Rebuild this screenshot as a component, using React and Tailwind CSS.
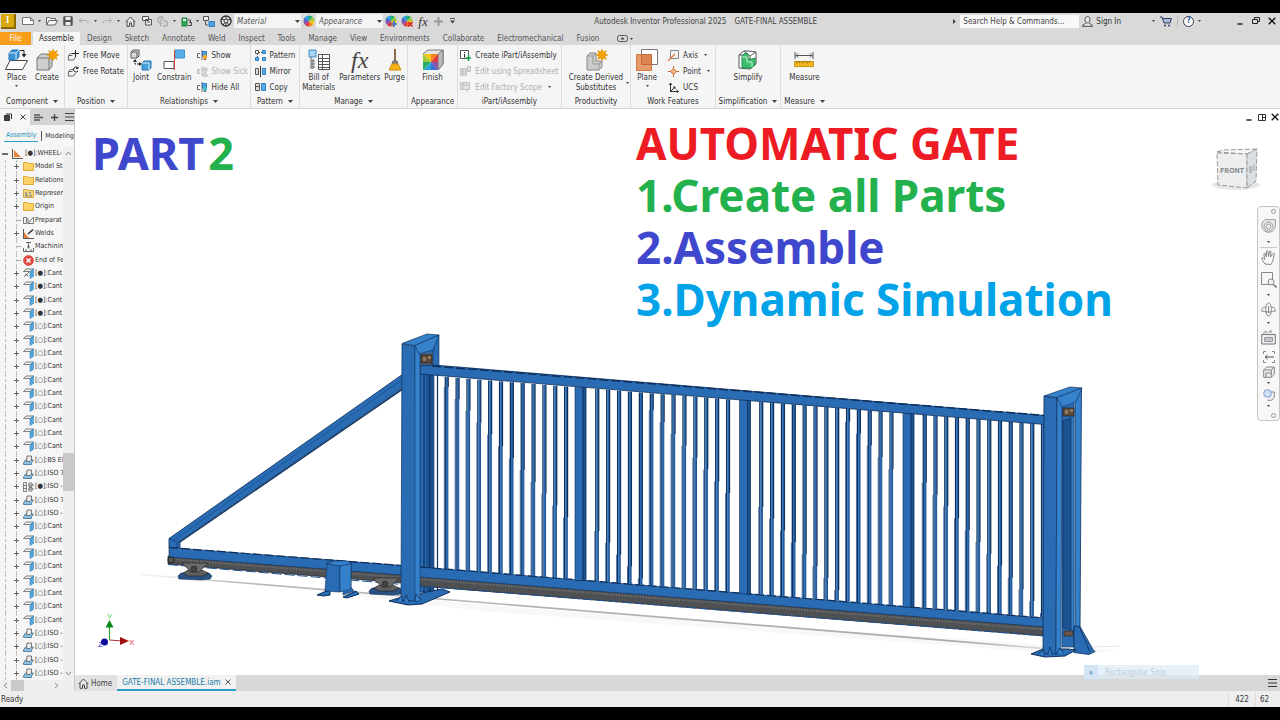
import { useState } from 'react'
import clsx from 'clsx'

const TABS = [
  'Assemble', 'Design', 'Sketch', 'Annotate', 'Weld', 'Inspect', 'Tools', 'Manage',
  'View', 'Environments', 'Collaborate', 'Electromechanical', 'Fusion'
]

const repeat = (n, row) => Array.from({ length: n }, () => row)

const TREE = [
  { icon: 'folder', label: 'Model St', open: true },
  { icon: 'folder', label: 'Relations', open: true },
  { icon: 'folderRep', label: 'Represen', open: true },
  { icon: 'folder', label: 'Origin', open: true },
  { icon: 'prep', label: 'Preparat' },
  { icon: 'weld', label: 'Welds', open: true },
  { icon: 'machining', label: 'Machinin' },
  { icon: 'end', label: 'End of Fe' },
  { icon: 'partPin', label: '[●]:Cant', open: true },
  ...repeat(3, { icon: 'part', label: '[●]:Cant', open: true }),
  ...repeat(10, { icon: 'part', label: '[○]:Cant', open: true }),
  { icon: 'bolt', label: '[○]:BS El', open: true },
  { icon: 'bolt', label: '[○]:ISO 7', open: true },
  { icon: 'pattern', label: '[●]:ISO -', open: true },
  { icon: 'bolt', label: '[○]:ISO 7', open: true },
  { icon: 'bolt', label: '[○]:ISO -', open: true },
  ...repeat(8, { icon: 'part', label: '[○]:Cant', open: true }),
  ...repeat(4, { icon: 'bolt', label: '[○]:ISO -', open: true })
]

function Svg({ w, h, children, className }) {
  return (
    <svg width={w} height={h} viewBox={`0 0 ${w} ${h}`} fill="none" stroke="#555" className={clsx('shrink-0', className)} aria-hidden="true">
      {children}
    </svg>
  )
}

const Caret = ({ className }) => (
  <Svg w={5} h={3} className={className}><path d="M0 0h5L2.500 3z" fill="#444" stroke="none" /></Svg>
)

const SmallCaret = ({ className }) => (
  <Svg w={3} h={2} className={className}><path d="M0 0h3L1.500 2z" fill="#444" stroke="none" /></Svg>
)

const WHEEL = ['#f5c518', '#f58220', '#e0383e', '#8c4fa8', '#3f6fd0', '#27a7d8', '#27ae60', '#9bcb3c']

function ColorWheel({ badge }) {
  return (
    <Svg w={12} h={12}>
      <g stroke="none">
        {WHEEL.map((c, i) => {
          const a = (i * Math.PI) / 4
          const b = a + Math.PI / 4
          return (
            <path
              key={c}
              fill={c}
              d={`M6 6L${6 + 5.5 * Math.cos(a)} ${6 + 5.5 * Math.sin(a)}A5.5 5.5 0 0 1 ${6 + 5.5 * Math.cos(b)} ${6 + 5.5 * Math.sin(b)}z`}
            />
          )
        })}
      </g>
      {badge === 'add' && <path d="M9 6v6M6 9h6" stroke="#2f6fd0" strokeWidth="1.6" />}
      {badge === 'clear' && <path d="M7 7l4.500 4.500M11.500 7L7 11.500" stroke="#d8232a" strokeWidth="1.6" />}
    </Svg>
  )
}

const QUICK = {
  new: <Svg w={12} h={10}><path d="M.5 1.500h8l3 3v4h-11zM8.500 1.500v3h3" fill="#fff" stroke="#777" /></Svg>,
  open: <Svg w={12} h={10}><path d="M.5 9V1.500h3l1 1h5v2M.5 9l2.500-4.500h8.500L9 9z" fill="#f4f4f4" stroke="#666" /></Svg>,
  save: <Svg w={10} h={10}><path d="M.8.8h8.400v8.400H.8z" fill="#555" /><path d="M2.500 1h5v3h-5zM2.500 6h5v3.200h-5z" fill="#eee" stroke="none" /></Svg>,
  undo: <Svg w={11} h={8}><path d="M4 1L1 3.500 4 6M1 3.500h6.500c2 0 2.500 1.500 2.500 3" stroke="#aaa" /></Svg>,
  redo: <Svg w={11} h={8}><path d="M7 1l3 2.500L7 6M10 3.500H3.500C1.500 3.500 1 5 1 6.500" stroke="#b4b4b4" /></Svg>,
  home: <Svg w={11} h={11}><path d="M.7 6L5.500 1l4.800 5M2 5v5.300h2.500V7h2v3.300H9V5" fill="#eee" stroke="#444" /></Svg>,
  windows: <Svg w={10} h={10}><path d="M.5.5h6v4h-6zM3.500 3.500h6v5.500h-6zM5 6h3" fill="#eee" /></Svg>,
  update: <Svg w={11} h={11}><path d="M1 6V3a2 2 0 0 1 2-2h3v2M5 2.500L2 7h2.500L3 10.500M6 5h4v5H6" stroke="#999" /></Svg>,
  battery: <Svg w={11} h={11}><path d="M1 2h5v8H1z" fill="#2eaa57" stroke="#237a41" /><path d="M2 3h3v2H2z" fill="#eaf6ee" stroke="none" /><path d="M7 4h2.500v2.500H8h2.500v3H7" stroke="#444" /></Svg>,
  link: <Svg w={12} h={11}><path d="M.5.5h5v4h-5z" fill="#eee" /><path d="M2.500 5v4h3" /><path d="M6 5.500h5.500v5H6z" fill="#4da3df" stroke="#2f7fc0" /></Svg>,
  wheel: (
    <Svg w={12} h={12}>
      <circle cx="6" cy="6" r="5" fill="#eee" stroke="#333" strokeWidth="1.400" />
      <circle cx="6" cy="6" r="2" stroke="#333" />
      <path d="M6 1v3M6 8v3M1.500 4l2.700 1M10.500 4L7.800 5M3 10l1.700-2.300M9 10L7.300 7.700" stroke="#333" />
    </Svg>
  )
}

const QUICK_BAR = [
  ['new', 'New', 'w-[17px]', true],
  ['open', 'Open', 'w-[17px]'],
  ['save', 'Save', 'w-[15px]'],
  ['undo', 'Undo', 'w-[17px]', true],
  ['redo', 'Redo', 'w-[16px]', true],
  ['home', 'Home', 'w-[17px]'],
  ['windows', 'Switch windows', 'w-[15px]'],
  ['update', 'Update', 'w-[17px]', true],
  ['battery', 'Select priority', 'w-[16px]', true],
  ['link', 'Component', 'w-[16px]'],
  ['wheel', 'Adjust', 'w-[17px]']
]

const starPath = 'M0-6l1.300 3L4.400-4.400 3-1.300 6 0 3 1.300 4.400 4.400 1.300 3 0 6-1.300 3-4.400 4.400-3 1.300-6 0-3-1.300-4.400-4.400-1.300-3z'

const BIG = {
  place: (
    <Svg w={23} h={22}>
      <path d="M5 11.500h17.500l-5 9H.5z" fill="#fff" stroke="#444" />
      <path d="M4 4l3-3h7v7l-3 3H4z" fill="#3c93d6" stroke="#2573b3" />
      <path d="M4 4h7v7M11 4l3-3" stroke="#cfe6f7" />
      <path d="M15 1.500h4V6" stroke="#222" /><path d="M16.500 5h5L19 8.500z" fill="#222" stroke="none" />
    </Svg>
  ),
  create: (
    <Svg w={23} h={22}>
      <path d="M1 9l4-4h11v12l-3 4H1z" fill="#cfcfcf" stroke="#777" />
      <path d="M1 9h12v12M13 9l3-4" stroke="#777" />
      <path d={starPath} transform="translate(17 6)" fill="#f5a100" stroke="#d98900" strokeWidth=".5" />
    </Svg>
  ),
  joint: (
    <Svg w={22} h={22}>
      <path d="M1 3l2-2h6v6l-2 2H1zM1 3h6v6" fill="#ddd" stroke="#555" />
      <path d="M5 11v4h5" stroke="#222" strokeDasharray="2 1" />
      <path d="M3 13l2-3 2 3zM9 13l3 2-3 2z" fill="#222" stroke="none" />
      <path d="M12 14l2-2h7v7l-2 2h-7z" fill="#4aa0dd" stroke="#2573b3" /><path d="M12 14h7v7" stroke="#d4e9f8" />
    </Svg>
  ),
  constrain: (
    <Svg w={22} h={22}>
      <path d="M1 12.500h10v7H1z" fill="#fff" stroke="#555" />
      <path d="M12 1h9.500v8H12z" fill="#5aade6" stroke="#3c8fcf" />
      <path d="M11.500 1v20" stroke="#d0463f" />
    </Svg>
  ),
  bom: (
    <Svg w={22} h={22}>
      <path d="M1 1h7v7H1z" fill="#a8d4f2" stroke="#3f8fc9" />
      <path d="M3 8v12M3 12h4M3 18h4M3 15h4M5 10v10" stroke="#666" />
      <path d="M10.500 5.500h11v15h-11zM10.500 9.500h11M10.500 12.500h11M10.500 15.500h11M10.500 18.500h11M14.500 5.500v15" fill="#fff" stroke="#555" />
    </Svg>
  ),
  purge: (
    <Svg w={14} h={22}>
      <path d="M7 0v12" stroke="#7a4a1c" strokeWidth="1.600" />
      <path d="M5 12h4l1 3H4z" fill="#888" stroke="#666" />
      <path d="M4 15h6l3 6H1z" fill="#f6b31b" stroke="#d28d00" />
    </Svg>
  ),
  finish: (
    <Svg w={22} h={22}>
      <path d="M1 5l5-4h15v14l-5 6" fill="#e4e4e4" stroke="#777" /><path d="M16 5l5-4v14l-5 6z" fill="#bbb" stroke="#777" />
      <g stroke="none">
        <path d="M1 5h8v8z" fill="#f5c518" /><path d="M9 5h7l-7 8z" fill="#f58220" />
        <path d="M16 5v8H9z" fill="#e0383e" /><path d="M16 13v8l-7-8z" fill="#8c4fa8" />
        <path d="M16 21H9v-8z" fill="#3f6fd0" /><path d="M9 21H1l8-8z" fill="#27a7d8" />
        <path d="M1 21v-8h8z" fill="#27ae60" /><path d="M1 13V5l8 8z" fill="#9bcb3c" />
      </g>
    </Svg>
  ),
  derived: (
    <Svg w={23} h={22}>
      <path d="M2 7l3-3h6v8h6v6l-3 3H2z" fill="#ccc" stroke="#888" />
      <path d="M2 7h6v8h6v6M8 7l3-3M14 15l3-3" stroke="#999" />
      <path d={starPath} transform="translate(17 6)" fill="#f5a100" stroke="#d98900" strokeWidth=".5" />
    </Svg>
  ),
  plane: (
    <Svg w={22} h={22}>
      <path d="M5.500.5h16v15h-16z" fill="#fff" stroke="#777" />
      <path d="M.5 5.500h15v16H.5z" fill="#e59a6c" stroke="#d8783d" />
      <path d="M5.500 5.500h10v10h-10z" fill="#dd8450" stroke="#c76a35" />
    </Svg>
  ),
  simplify: (
    <Svg w={20} h={22}>
      <path d="M1 6l5-4h5l7 1v12l-6 5-11-1z" fill="#fff" stroke="#555" />
      <path d="M1 6h6l1 6M18 3l-6 4v13M6 2l6 5" stroke="#555" />
      <path d="M4 7l3-3 3 1v5h4l3-1v7l-4 3H4z" fill="#3fbf6e" stroke="#1f8c49" />
      <path d="M4 8h5v5h5v5" stroke="#c9f0d7" />
    </Svg>
  ),
  measure: (
    <Svg w={20} h={16}>
      <path d="M1 0v7M19 0v7M2 3.500h16M4 1.500l-2 2 2 2M16 1.500l2 2-2 2" stroke="#555" />
      <path d="M.5 9.500h19v5H.5z" fill="#f3b81f" stroke="#c99410" />
      <path d="M3 9v3M5.500 9v2M8 9v3M10.500 9v2M13 9v3M15.500 9v2" stroke="#7a5a00" strokeWidth=".7" />
    </Svg>
  )
}

const SMALL = {
  freeMove: <Svg w={11} h={11}><path d="M.5 5.500l2-2h3M.5 5.500V10h5l1.500-2v-1M.5 5.500h4" stroke="#666" /><path d="M7.500 0v7M4 3.500h7" stroke="#222" /></Svg>,
  freeRotate: <Svg w={11} h={11}><path d="M.5 5.500l2-2h3M.5 5.500V10h5l1.500-2v-1M.5 5.500h4" stroke="#666" /><path d="M9.500 1.500A2.500 2.500 0 1 0 10 5M10 .5v2H8" stroke="#222" /></Svg>,
  show: <Svg w={11} h={11}><path d="M3 3.500H.5v4H3M5 0v10" stroke="#666" /><path d="M5.500 1.500h4V6h-4z" fill="#4da3df" stroke="#2f7fc0" /><circle cx="8" cy="7" r="2.200" fill="#f5a623" stroke="none" /><path d="M7 9.500h2" /></Svg>,
  showSick: <Svg w={11} h={11}><path d="M3 3.500H.5v4H3M5 0v10M6 2h4v3H6zM8 6l2.500 4h-5z" stroke="#bbb" fill="#ddd" /></Svg>,
  hideAll: <Svg w={11} h={11}><path d="M3 3.500H.5v4H3M5 0v10" stroke="#666" /><path d="M5.500 1.500h4V6h-4z" fill="#4da3df" stroke="#2f7fc0" /><circle cx="8" cy="7" r="2.200" fill="#4cb8c4" stroke="none" /><path d="M7 9.500h2" /></Svg>,
  pattern: <Svg w={11} h={11}><path d="M.5.500h3v3h-3z" fill="#fff" /><path d="M7.500.5h3v3h-3zM.5 7.500h3v3h-3zM7.500 7.500h3v3h-3z" fill="#5aade6" stroke="#2f7fc0" /><path d="M4 2.500h3M2.500 4v3" strokeDasharray="1 1" /></Svg>,
  mirror: <Svg w={11} h={11}><path d="M.5 2.500h3v6h-3z" fill="#ddd" /><path d="M5.500 0v11" stroke="#333" /><path d="M7.500 2.500h3v6h-3z" fill="#5aade6" stroke="#2f7fc0" /></Svg>,
  copy: <Svg w={11} h={11}><path d="M.5 1.500h4v7h-4z" fill="#ddd" /><path d="M6.500 1.500h4v7h-4z" fill="#5aade6" stroke="#2f7fc0" /><path d="M.5 4.500h4" /></Svg>,
  ipart: <Svg w={11} h={11}><path d="M.5.5h8v8h-8z" fill="#fff" stroke="#555" /><path d="M4.500 2v1M4.500 4v3.500" stroke="#222" /><path d="M8.500 5v6M5.500 8h6" stroke="#17a04b" strokeWidth="1.500" /></Svg>,
  sheet: <Svg w={11} h={11}><path d="M.5 2.500h6v7h-6zM.5 5h6M.5 7.500h6M3 2.500v7M7.500.500h3v5h-3z" stroke="#c0c0c0" fill="#e4e4e4" /></Svg>,
  scope: <Svg w={11} h={11}><path d="M.5.500h9v7h-9zM.5 3h9M3 .5v7M6 10l4-4" stroke="#c0c0c0" fill="#e4e4e4" /></Svg>,
  axis: <Svg w={11} h={11}><path d="M2.500.500h8v8h-8z" fill="#f4f4f4" stroke="#888" /><path d="M0 11l7-7" stroke="#e07b39" strokeWidth="1.300" /></Svg>,
  point: <Svg w={11} h={11}><path d="M5.500 0v11M0 5.500h11" stroke="#c96a2c" /><path d="M5.500 2.500l3 3-3 3-3-3z" fill="#f7b183" stroke="#c96a2c" /></Svg>,
  ucs: <Svg w={11} h={11}><path d="M2.500 10V1M1 3l1.500-2L4 3M2.500 9.500h8M8.500 8l2 1.500L8.500 11M2.500 9.500L7 5M5 5h2v2" stroke="#333" /></Svg>
}

const TREE_ICONS = {
  folder: <Svg w={11} h={9}><path d="M.5.500h4l1 1h5v7H.5z" fill="#fbd267" stroke="#e0aa35" /></Svg>,
  folderRep: <Svg w={11} h={9}><path d="M.5.500h4l1 1h5v7H.5z" fill="#f3d37c" stroke="#d6a843" /><path d="M3 3v4h2M6 4h2M6 7h3" stroke="#55708a" /></Svg>,
  prep: <Svg w={11} h={9}><path d="M.5 1.500h3v6h-3zM5 7.500h5.500V1zM5 2v5.500" stroke="#777" /></Svg>,
  weld: <Svg w={11} h={10}><path d="M.5 0v9.500H11" stroke="#555" /><path d="M1 3l5 6H1z" fill="#e8843a" stroke="none" /><path d="M5 5l5-4.500" stroke="#333" strokeWidth="1.600" /></Svg>,
  machining: <Svg w={11} h={10}><path d="M3 .5h5M5.500.500v6M4 5h3M.5 6v3.500h10V6M3 7v2M8 7v2" stroke="#666" /></Svg>,
  end: <Svg w={11} h={11}><circle cx="5.500" cy="5.500" r="5" fill="#df4b43" stroke="#c73932" strokeWidth=".6" /><path d="M3.500 3.500l4 4M7.500 3.500l-4 4" stroke="#fff" strokeWidth="1.400" /></Svg>,
  part: <Svg w={11} h={11}><path d="M.5 3.500L3 1h7.500L7.500 3.500z" fill="#f4f4f4" stroke="#666" strokeWidth=".8" /><path d="M7 3.500L10.500 1v7.500L7 10.500z" fill="#4fa6dc" stroke="#3c89bd" strokeWidth=".6" /></Svg>,
  partPin: <Svg w={11} h={11}><path d="M.5 3.500L3 1h7.500L7.500 3.500zM1 9l5-5M2 6l3 2" fill="#f4f4f4" stroke="#555" strokeWidth=".8" /><path d="M7 3.500L10.500 1v7.500L7 10.500z" fill="#4fa6dc" stroke="#3c89bd" strokeWidth=".6" /></Svg>,
  bolt: <Svg w={11} h={10}><path d="M.5 8l2-3h8l-2 3v1.500h-8z" fill="#8cc3e8" stroke="#3f6f95" strokeWidth=".8" /><path d="M4 1h4.500v4L7 6.500H3.500z" fill="#eee" stroke="#555" strokeWidth=".8" /></Svg>,
  pattern: <Svg w={11} h={10}><path d="M.5.500h3v9h-3zM.5 3.500h3M.5 6.500h3M5 3h6M5 7h6M6 1v3.500h3V1zM6 5.500V9h3V5.500z" stroke="#666" strokeWidth=".8" fill="#eee" /></Svg>
}

function BigButton({ icon, label, caret, className, side }) {
  return (
    <button className={clsx('flex flex-col items-center leading-[10px]', className)}>
      <span className="flex h-[26px] items-center justify-center">{BIG[icon] || icon}</span>
      <span className="relative whitespace-pre-line text-center">
        {label}
        {side && <SmallCaret className="absolute -right-[6px] top-[9px]" />}
      </span>
      {caret && <SmallCaret className="mt-[2px]" />}
    </button>
  )
}

function SmallButton({ icon, label, caret, disabled }) {
  return (
    <button disabled={disabled} className={clsx('flex h-4 items-center gap-[4px] whitespace-nowrap', disabled && 'text-[#b0b0b0]')}>
      {SMALL[icon]}
      <span>{label}</span>
      {caret && <SmallCaret className="ml-[2px]" />}
    </button>
  )
}

function Group({ title, caret, className, gap = 'gap-[5px]', children }) {
  return (
    <section className={clsx('flex shrink-0 flex-col border-r border-[#dcdcdc]', className)}>
      <div className={clsx('flex flex-1 items-start justify-center pt-[2px]', gap)}>{children}</div>
      <h2 className="flex h-[13px] items-center justify-center gap-[5px] whitespace-nowrap">
        {title}
        {caret && <Caret />}
      </h2>
    </section>
  )
}

function TitleBar() {
  return (
    <header className="flex h-[19px] shrink-0 items-center bg-[#d9d9d9] pb-[3px] whitespace-nowrap">
      <button aria-label="Application menu" className="ml-px mr-[3px] flex h-[15px] w-[15px] items-center justify-center border-r-2 border-b-2 border-[#8a6a00] bg-[#d9a90f] font-serif text-[9px] font-bold text-white">I</button>
      {QUICK_BAR.map(([icon, label, width, caret]) => (
        <div key={icon} className="flex items-center">
          <button aria-label={label} className={clsx('flex items-center justify-center', width)}>{QUICK[icon]}</button>
          {caret && <button aria-label={`${label} options`} className="flex w-[7px] justify-center"><SmallCaret /></button>}
        </div>
      ))}
      <Picker label="Material" />
      <span className="flex w-[15px] justify-center"><ColorWheel /></span>
      <Picker label="Appearance" />
      <button aria-label="Adjust appearance" className="flex w-4 justify-center"><ColorWheel badge="add" /></button>
      <button aria-label="Clear appearance" className="flex w-4 justify-center"><ColorWheel badge="clear" /></button>
      <button className="w-4 text-center font-['Liberation_Serif',serif] text-[13px] italic leading-none text-[#333]">fx</button>
      <button aria-label="Add" className="flex w-[15px] justify-center"><Svg w={9} h={9}><path d="M4.500 0v9M0 4.500h9" stroke="#999" strokeWidth="2" /></Svg></button>
      <button aria-label="Customize toolbar" className="flex w-3 justify-center"><Svg w={5} h={6}><path d="M0 .5h5" /><path d="M0 2.500h5L2.500 5.500z" fill="#444" stroke="none" /></Svg></button>

      <h1 className="flex flex-1 justify-center gap-2 text-[#444]">
        <span>Autodesk Inventor Professional 2025</span>
        <span>GATE-FINAL ASSEMBLE</span>
      </h1>

      <Svg w={3} h={5} className="mr-[4px]"><path d="M0 0v5l3-2.500z" fill="#444" stroke="none" /></Svg>
      <input
        aria-label="Search Help & Commands"
        placeholder="Search Help & Commands..."
        className="h-[13px] w-[119px] bg-[#f8f8f8] px-[3px] text-[8px] placeholder:text-[#444]"
      />
      <button className="ml-[3px] flex items-center gap-[3px]">
        <Svg w={11} h={11}><path d="M5.500.700c2 0 2.500 1.500 2.500 3S7 7 5.500 7 3 5 3 3.700 3.500.7 5.500.7zM4 7c0 1-3.500 1-3.500 3.300h10C10.500 8 7 8 7 7" stroke="#444" fill="#e8e8e8" /></Svg>
        Sign In
      </button>
      <button aria-label="Account options" className="ml-[29px] flex w-[7px] justify-center"><SmallCaret /></button>
      <button aria-label="App store" className="ml-[3px]">
        <Svg w={12} h={11}><path d="M0 1h2l2 6h6l1.500-4.500H3" stroke="#2c3e66" fill="#a9b9d6" /><circle cx="5" cy="9.500" r="1" fill="#2c3e66" stroke="none" /><circle cx="9" cy="9.500" r="1" fill="#2c3e66" stroke="none" /></Svg>
      </button>
      <span className="mx-[5px] h-[12px] w-px bg-[#bbb]" />
      <button aria-label="Help" className="flex h-[11px] w-[11px] items-center justify-center rounded-full border border-[#345] bg-white font-bold leading-none text-[#2a55a0]">?</button>
      <button aria-label="Help options" className="flex w-[11px] justify-center"><SmallCaret /></button>
      <div className="ml-[31px] flex items-center gap-[8px] pr-[4px]">
        <WindowButton label="Minimize" />
        <WindowButton label="Restore" />
        <WindowButton label="Close" />
      </div>
    </header>
  )
}

function WindowButton({ label }) {
  return (
    <button aria-label={label}>
      <Svg w={8} h={8}>
        {label === 'Minimize' && <path d="M1.500 7h5" stroke="#111" strokeWidth="1.400" />}
        {label === 'Restore' && <path d="M2.500 2.500V.500h5v4H5.500M.500 2.500h5v4h-5z" stroke="#222" />}
        {label === 'Tile' && <path d="M.5 1.500h7v6h-7zM4.500 1.500v6M4.500 4.500h3" stroke="#333" />}
        {label === 'Close' && <path d="M.7.7l6.600 6.600M7.300.7L.7 7.300" stroke="#111" strokeWidth="1.300" />}
      </Svg>
    </button>
  )
}

function Picker({ label }) {
  return (
    <div className="relative flex w-[67px] items-center">
      <select aria-label={label} className="h-[14px] w-full appearance-none bg-[#f4f4f4] pl-[3px] text-[8px] italic text-[#555]">
        <option>{label}</option>
      </select>
      <Caret className="pointer-events-none absolute right-[1px]" />
    </div>
  )
}

function RibbonTabs() {
  const [active, setActive] = useState('Assemble')
  return (
    <nav className="flex h-[13px] shrink-0 items-stretch gap-px bg-[#d9d9d9] whitespace-nowrap text-[#555]">
      <button className="mr-px w-[31px] bg-[#f99d1c] text-white">File</button>
      {TABS.map(t => (
        <button key={t} onClick={() => setActive(t)} className={clsx('px-[6px]', active === t && 'bg-[#f5f5f5] text-[#222]')}>
          {t}
        </button>
      ))}
      <button aria-label="Ribbon display" className="ml-[11px] flex items-center gap-[2px]">
        <Svg w={11} h={7}><rect x=".5" y=".5" width="10" height="6" rx="2" stroke="#555" /><path d="M3.500 4.500L5.500 2l2 2.500z" fill="#444" stroke="none" /></Svg>
        <SmallCaret />
      </button>
    </nav>
  )
}

function Ribbon() {
  return (
    <div className="flex h-[64px] shrink-0 border-b border-[#d4d4d4] bg-[#f5f5f5] text-[#333]">
      <Group title="Component" caret className="w-[65px]" gap="gap-[7px]">
        <BigButton icon="place" label="Place" caret />
        <BigButton icon="create" label="Create" />
      </Group>
      <Group title="Position" caret className="w-[63px]">
        <div>
          <SmallButton icon="freeMove" label="Free Move" />
          <SmallButton icon="freeRotate" label="Free Rotate" />
        </div>
      </Group>
      <Group title="Relationships" caret className="w-[123px]">
        <BigButton icon="joint" label="Joint" />
        <BigButton icon="constrain" label="Constrain" />
        <div>
          <SmallButton icon="show" label="Show" />
          <SmallButton icon="showSick" label="Show Sick" disabled />
          <SmallButton icon="hideAll" label="Hide All" />
        </div>
      </Group>
      <Group title="Pattern" caret className="w-[49px]">
        <div>
          <SmallButton icon="pattern" label="Pattern" />
          <SmallButton icon="mirror" label="Mirror" />
          <SmallButton icon="copy" label="Copy" />
        </div>
      </Group>
      <Group title="Manage" caret className="w-[108px]" gap="gap-[4px]">
        <BigButton icon="bom" label={'Bill of\nMaterials'} />
        <BigButton
          icon={<span className="font-['Liberation_Serif',serif] text-[24px] italic leading-[22px] text-[#444]">fx</span>}
          label="Parameters"
        />
        <BigButton icon="purge" label="Purge" />
      </Group>
      <Group title="Appearance" className="w-[50px]">
        <BigButton icon="finish" label="Finish" />
      </Group>
      <Group title="iPart/iAssembly" className="w-[104px]">
        <div>
          <SmallButton icon="ipart" label="Create iPart/iAssembly" />
          <SmallButton icon="sheet" label="Edit using Spreadsheet" disabled />
          <SmallButton icon="scope" label="Edit Factory Scope" caret disabled />
        </div>
      </Group>
      <Group title="Productivity" className="w-[69px]">
        <BigButton icon="derived" label={'Create Derived\nSubstitutes'} side />
      </Group>
      <Group title="Work Features" className="w-[85px]" gap="gap-[10px]">
        <BigButton icon="plane" label="Plane" caret />
        <div>
          <SmallButton icon="axis" label="Axis" caret />
          <SmallButton icon="point" label="Point" caret />
          <SmallButton icon="ucs" label="UCS" />
        </div>
      </Group>
      <Group title="Simplification" caret className="w-[65px]">
        <BigButton icon="simplify" label="Simplify" />
      </Group>
      <Group title="Measure" caret className="w-[47px] border-r-0">
        <BigButton icon="measure" label="Measure" />
      </Group>
    </div>
  )
}

function Chevron({ dir }) {
  const d = { up: 'M1 4l2.500-3L6 4', down: 'M1 1l2.500 3L6 1', left: 'M4 0L1 2.500 4 5', right: 'M2 0l3 2.500L2 5' }[dir]
  return <Svg w={7} h={5}><path d={d} stroke="#888" /></Svg>
}

function Browser() {
  return (
    <aside className="flex w-[75px] shrink-0 flex-col border-r border-[#c8c8c8] bg-[#f6f6f6] text-[#333]">
      <div className="flex h-[16px] shrink-0 bg-[#d4d4d4]">
        <div className="flex w-[30px] items-center justify-center gap-[8px] bg-[#f6f6f6]">
          <Svg w={8} h={8}><path d="M.5 2.500h5v5h-5z" fill="#444" stroke="#333" /><path d="M2 1h5.500v5" stroke="#333" /></Svg>
          <button aria-label="Close panel"><Svg w={6} h={6}><path d="M.5.500l5 5M5.500.500l-5 5" stroke="#444" /></Svg></button>
        </div>
        <div className="flex flex-1 items-center justify-between pl-[4px]">
          <Svg w={9} h={7}><path d="M0 1h6M0 3.500h9M0 6h6" stroke="#555" strokeWidth="1.500" /></Svg>
          <button aria-label="Add panel"><Svg w={7} h={7}><path d="M3.500 0v7M0 3.500h7" stroke="#444" strokeWidth="1.300" /></Svg></button>
          <button aria-label="Panel menu"><Svg w={9} h={8}><path d="M0 .5h9M0 4h9M0 7.500h9" stroke="#444" /></Svg></button>
        </div>
      </div>
      <div className="flex h-[22px] shrink-0 items-center whitespace-nowrap pl-[4px] text-[7px]">
        <button className="border-b border-[#2b9fc9] px-[2px] leading-[11px] text-[#1b8fb8]">Assembly</button>
        <span className="mx-[3px] h-[10px] w-px bg-[#555]" />
        <button className="leading-[11px]">Modeling</button>
      </div>
      <div className="flex flex-1">
        <ul className="flex w-[63px] flex-col overflow-hidden whitespace-nowrap text-[7px]">
          <li className="flex min-h-[13px] flex-1 items-center">
            <button aria-label="Collapse" className="ml-[2px] mr-[4px]"><Svg w={6} h={6}><path d="M0 3h6" stroke="#222" strokeWidth="1.300" /></Svg></button>
            <Svg w={11} h={10}><path d="M.5 0v9.500H11" stroke="#555" /><path d="M2 1l7 7H2z" fill="#e8843a" stroke="none" /></Svg>
            <span className="ml-[2px]">[●]:WHEEL-</span>
          </li>
          {TREE.map((row, i) => (
            <li key={i} className="flex min-h-[13px] flex-1 items-center">
              <span className="w-[6px] shrink-0 self-stretch border-r border-dashed border-[#c0c0c0]" />
              <span className="w-[11px] shrink-0 self-stretch border-r border-dashed border-[#c0c0c0]" />
              {row.open ? (
                <button aria-label="Expand" className="-ml-[4px] mr-[3px] bg-[#f6f6f6]">
                  <Svg w={7} h={7}><path d="M3.500 1v5M1 3.500h5" stroke="#666" /></Svg>
                </button>
              ) : (
                <span className="mr-[2px] w-[4px] shrink-0 border-t border-dashed border-[#aaa]" />
              )}
              {TREE_ICONS[row.icon]}
              <span className="ml-px">{row.label}</span>
            </li>
          ))}
        </ul>
        <div className="flex flex-1 flex-col items-center bg-[#efefef]">
          <span className="flex h-[13px] items-center"><Chevron dir="up" /></span>
          <span className="grow-[5]" />
          <span className="h-[38px] w-full bg-[#c9c9c9]" />
          <span className="grow-[3]" />
          <span className="flex h-[13px] items-center"><Chevron dir="down" /></span>
        </div>
      </div>
      <div className="flex h-[11px] shrink-0 items-center bg-[#efefef] pl-[3px]">
        <Chevron dir="left" />
        <span className="ml-px h-full w-[13px] bg-[#c9c9c9]" />
        <span className="ml-[29px]"><Chevron dir="right" /></span>
      </div>
    </aside>
  )
}

const NAVY = '#0d2f5c'
const BLUE = '#2a6cb3'
const LIGHT = '#3581cc'
const DARK = '#1d5292'

// height of the top and bottom rails at a given x
const topRail = x => 367 + (x - 420) * 0.079
const bottomRail = x => 567 + (x - 420) * 0.081

const BARS = [
  ...Array.from({ length: 12 }, (_, i) => 446.5 + i * 10.85),
  ...Array.from({ length: 13 }, (_, i) => 597 + i * 10.9),
  ...Array.from({ length: 13 }, (_, i) => 761 + i * 10.85),
  ...Array.from({ length: 12 }, (_, i) => 924.5 + i * 10.75)
]

function Roller({ x, y }) {
  return (
    <g transform={`translate(${x} ${y})`} stroke="#222" strokeWidth=".6">
      <path d="M-16 10l3-3h28l3 3-2 3-9 1-22-1z" fill="#2a5180" stroke={NAVY} />
      <path d="M-11 7l5-3h14l6 3-5 3h-15z" fill="#5f5f5f" />
      <path d="M-12-3h26l-9 9h-8z" fill="#6a6a6a" />
      <circle cx="0" cy="3" r="3" fill="#444" />
    </g>
  )
}

function Gate() {
  return (
    <svg viewBox="75 109 1205 566" preserveAspectRatio="xMinYMin meet" className="absolute inset-0 h-full w-full" role="img" aria-label="Sliding gate assembly">
      <defs>
        <linearGradient id="ground" x1="0" x2="1"><stop offset="0" stopColor="#ddd" stopOpacity=".3" /><stop offset=".1" stopColor="#bbb" /><stop offset=".9" stopColor="#aaa" /><stop offset="1" stopColor="#ddd" /></linearGradient>
      </defs>

      {/* ground shadow */}
      <path d="M250 583L520 608 1120 650 1080 655 480 611z" fill="#f8f8f8" />
      <path d="M140 574.500L1050 649" stroke="url(#ground)" strokeWidth="1.600" />
      <path d="M1090 647l30-1" stroke="#e4e4e4" />

      {/* rear frame of the left post */}
      <path d="M420 350h14v242h-14z" fill={BLUE} stroke={NAVY} strokeWidth=".6" />
      <path d="M426 372h8v222h-8z" fill={DARK} />
      <path d="M424 372v222M430 372v224M437.500 374v216" stroke={NAVY} strokeWidth="1.200" />
      <path d="M420 353h13v12h-13z" fill="#4f6175" />
      <path d="M421 355h11v8h-11z" fill="#5b4b3c" stroke="#222" strokeWidth=".7" />
      <path d="M423 357h3v4h-3zM428 356h3v3h-3z" fill="#93775a" />
      <path d="M433 337l6-2v31h-6z" fill={BLUE} stroke={NAVY} strokeWidth=".6" />

      {/* diagonal brace */}
      <path d="M169 538.500L403 374v14L180 541v7h-11z" fill={BLUE} stroke={NAVY} strokeWidth=".8" />
      <path d="M169 538.500l8 4 3-1.500M177 542.500v5" stroke={NAVY} strokeWidth=".6" fill="none" />
      <path d="M174 540L403 379" stroke={DARK} strokeWidth=".8" />
      <path d="M180 542L403 389" stroke={NAVY} strokeWidth="1.200" />

      {/* rack and lower rail */}
      <path d="M168 556L402 574l18 2 625 50v10L420 586l-18-3-234-19z" fill="#4f5051" stroke="#232a33" strokeWidth=".8" />
      <path d="M170 559L402 577.500l18 1.500L1045 629.500" fill="none" stroke="#6d6e70" strokeWidth="2" strokeDasharray="1.500 1.500" />
      <path d="M168 564.500L420 586 1045 636" fill="none" stroke={DARK} strokeWidth="1" strokeDasharray="10 3" />
      <path d="M169 547.500L402 565.500l18 1.500 625 51v9L420 577l-18-2-233-18z" fill={BLUE} stroke={NAVY} strokeWidth=".6" />
      <path d="M169 547.500L402 565.500l18 1.500 625 51" fill="none" stroke={NAVY} strokeWidth="1.200" strokeDasharray="9 3" />
      <circle cx="171" cy="560" r="3" fill="#555" stroke="#222" />

      {/* infill bars */}
      {BARS.map((x, i) => {
        const top = topRail(x) + 8
        const bottom = bottomRail(x)
        const split = top + 10 + ((i * 11) % 180)
        return (
          <g key={i}>
            <path d={`M${x - 1.2} ${top}V${bottom}`} stroke={NAVY} strokeWidth="1.300" />
            <path d={`M${x + 0.4} ${top}V${bottom}`} stroke={BLUE} strokeWidth="2" />
            <path d={`M${x + 1.7} ${top}V${split}`} stroke={NAVY} strokeWidth="1.300" />
            <path d={`M${x + 1.4} ${split}V${bottom}`} stroke={DARK} strokeWidth="1" />
            <path d={`M${x - 2.2} ${split}V${bottom}`} stroke={DARK} strokeWidth=".8" />
          </g>
        )
      })}
      {[575, 739.5, 903].map(x => (
        <g key={x}>
          <path d={`M${x} ${topRail(x) + 8}h8v${bottomRail(x) - topRail(x) - 7}h-8z`} fill={BLUE} stroke={NAVY} strokeWidth=".6" />
          <path d={`M${x + 8} ${topRail(x) + 8}h3v${bottomRail(x) - topRail(x) - 7}h-3z`} fill={DARK} stroke={NAVY} strokeWidth=".8" />
        </g>
      ))}

      {/* upper rail */}
      <path d="M420 366l14-1 611 50.500v9L420 374z" fill={BLUE} stroke={NAVY} strokeWidth=".8" />
      <path d="M432 366L1045 415.500" stroke={NAVY} strokeWidth="1.500" strokeDasharray="9 3" />

      {/* motor housing */}
      <path d="M317 595l7-3 6-2v5l-6 1zM343 597l13-6 3 3-12 4z" fill={BLUE} stroke={NAVY} />
      <path d="M344 566l7-3v24l3 4-11 4z" fill={BLUE} stroke={NAVY} strokeWidth=".6" />
      <path d="M327 563l13 2v27l-15-1z" fill={BLUE} stroke={NAVY} strokeWidth=".6" />
      <path d="M340 566l11-3v26l-11 3z" fill={LIGHT} stroke={NAVY} strokeWidth=".5" />
      <path d="M327 564l7-3h13l5 2-11 3z" fill={LIGHT} stroke={NAVY} strokeWidth=".6" />

      <Roller x={194} y={566} />
      <Roller x={385} y={581} />

      {/* left post */}
      <path d="M389 601l13-4 40-8 8 3-28 12-14 1z" fill={BLUE} stroke={NAVY} />
      <path d="M402 344l13 2 2 255-16-1z" fill={BLUE} stroke={NAVY} strokeWidth=".7" />
      <path d="M415 345l5 8v248h-5z" fill={LIGHT} stroke={NAVY} strokeWidth=".5" />
      <path d="M402 343.500L427 334l12 1-24 10.500z" fill={LIGHT} stroke={NAVY} strokeWidth=".7" />
      <path d="M415 345.500L439 335l-6 15-14 4z" fill={LIGHT} stroke={NAVY} strokeWidth=".6" />
      <path d="M396 601l6-5v6M404 602l2-7 3 7M415 601l1-7 5 6" stroke={NAVY} fill={LIGHT} strokeWidth=".8" />

      {/* right post */}
      <path d="M1062 400h12v247h-12z" fill={BLUE} stroke={NAVY} strokeWidth=".6" />
      <path d="M1063 421l8-3v212l-8-2z" fill={DARK} stroke={NAVY} strokeWidth=".6" />
      <path d="M1072.500 418v212" stroke={LIGHT} strokeWidth="1.500" />
      <path d="M1063 408h11v8h-11z" fill="#5b4b3c" stroke="#222" strokeWidth=".7" />
      <path d="M1065 410h3v4h-3zM1070 409h3v3h-3z" fill="#93775a" />
      <path d="M1064 631h9v5h-9z" fill="#6b5444" stroke="#222" strokeWidth=".6" />
      <path d="M1075 395l6.500-7-1.500 245h-5z" fill={LIGHT} stroke={NAVY} strokeWidth=".8" />
      <path d="M1074 626l6 .500 13 23 2 2-6 3-15-2z" fill={BLUE} stroke={NAVY} strokeWidth=".8" />
      <path d="M1079 626l11 26" stroke={NAVY} strokeWidth=".8" />
      <path d="M1031 654l12-5 25 0 8 1-11 6-20 1z" fill={BLUE} stroke={NAVY} />
      <path d="M1044 396l13 2-1 256-13-1z" fill={BLUE} stroke={NAVY} strokeWidth=".8" />
      <path d="M1057 397l5 9-1 247-5 1z" fill={LIGHT} stroke={NAVY} strokeWidth=".6" />
      <path d="M1044 396l26-9 12 1-25 9.500z" fill={LIGHT} stroke={NAVY} strokeWidth=".7" />
      <path d="M1057 397.500l25-9.500-6 14-14 5z" fill={LIGHT} stroke={NAVY} strokeWidth=".6" />
      <path d="M1038 654l6-4v5M1048 654l2-7 2 7M1057 654l2-6 5 5" stroke={NAVY} fill={LIGHT} strokeWidth=".8" />

      {/* axis triad */}
      <path d="M109.500 640v-13" stroke="#1a9c1a" /><path d="M105.500 627.500l4-7.500 4 7.500z" fill="#0b8a1d" />
      <path d="M109.500 640l13 1" stroke="#a33" /><path d="M120 637l9 4-9 4z" fill="#a00f0f" />
      <circle cx="104.500" cy="642" r="3.500" fill="#0b0b9a" />
      <g fontFamily="Liberation Sans, sans-serif" fontSize="8">
        <text x="107" y="619" fill="#4ad04a">Y</text>
        <text x="129" y="645" fill="#e03030">X</text>
        <text x="98" y="647" fill="#2020c0">Z</text>
      </g>
    </svg>
  )
}

function ViewCube() {
  return (
    <svg width="54" height="46" viewBox="0 0 54 46" className="absolute right-[17px] top-[38px]" role="img" aria-label="View cube">
      <ellipse cx="27" cy="38" rx="24" ry="5" fill="#e8e8e8" />
      <path d="M8 5l6-2 34-1-10 5z" fill="#f7f7f7" stroke="#999" strokeDasharray="5 2" />
      <path d="M8 6l30 1v34L9 38z" fill="#eceef0" stroke="#999" strokeDasharray="5 2" />
      <path d="M38 7l10-5-1 32-9 7z" fill="#dcdfe2" stroke="#999" strokeDasharray="5 2" />
      <text x="11" y="26" fontSize="7" fontWeight="bold" fontFamily="DejaVu Sans Condensed, sans-serif" fill="#8a8d91">FRONT</text>
      <path d="M41 19v7M41 20h2v3h-2l2 3M45 17v7" stroke="#a4a7ab" fill="none" />
    </svg>
  )
}

const NAV_TOOLS = [
  { label: 'Steering wheel', caret: true, rule: true, h: 'h-[24px]', icon: <Svg w={15} h={15}><path d="M4 .7h10.300v7a6.800 6.800 0 1 1-10.300-7z" stroke="#999" fill="#eee" /><circle cx="7.500" cy="7.500" r="4.500" stroke="#999" /><circle cx="7.500" cy="7.500" r="2.500" stroke="#999" /></Svg> },
  { label: 'Pan', h: 'h-[20px]', icon: <Svg w={15} h={16}><path d="M4 14C2 11 .5 9 1 8s2 0 3 1.500L2.800 4c0-1 1.200-1 1.500 0L5.500 7V1.500c0-1 1.300-1 1.500 0l.5 5 1-5c.2-1 1.500-.8 1.400.2L9.500 7 12 3.500c.5-.8 1.600-.2 1.300.700L12 10c-.5 2-1.500 3-2 4.500z" stroke="#888" fill="#f8f8f8" /></Svg> },
  { label: 'Zoom', caret: true, h: 'h-[23px]', icon: <Svg w={16} h={16}><path d="M.5.500h11v12H.5z" stroke="#888" /><circle cx="10" cy="10" r="3" fill="#eee" stroke="#888" /><path d="M12.500 12.500l3 3" stroke="#777" strokeWidth="1.600" /></Svg> },
  { label: 'Orbit', caret: true, h: 'h-[20px]', icon: <Svg w={15} h={15}><ellipse cx="7.500" cy="7.500" rx="2.800" ry="6.500" stroke="#888" /><path d="M4.500 5C2 5.500.7 6.500.7 7.500c0 1.500 3 2.500 6.800 2.500s6.800-1 6.800-2.500c0-1-1.300-2-3.800-2.500M2 8l-1.500 2M13 8l1.500 2M7.500 4v7" stroke="#888" /></Svg> },
  { label: 'Look at', h: 'h-[21px]', icon: <Svg w={15} h={15}><path d="M.7 4.500h13.600v9.500H.7z" stroke="#777" fill="#eee" /><path d="M3.500 7.500h8v4h-8z" fill="#c3c8cf" stroke="#999" /><path d="M2 3.500L5 1v2.500M7 3L10 .5V3" stroke="#888" /></Svg> },
  { label: 'Previous view', h: 'h-[17px]', icon: <Svg w={12} h={12}><path d="M.5 3V.5H3M9 .5h2.500V3M.5 9v2.500H3M9 11.500h2.500V9" stroke="#888" /><path d="M2 6h9M4.500 4L2 6l2.500 2" stroke="#555" /></Svg> },
  { label: 'Visual style', caret: true, h: 'h-[14px]', icon: <Svg w={12} h={12}><path d="M.7 4l3-3h7.600v7l-3 3.300H.7zM.7 4h7.600v7.300M8.300 4l3-3M3 11V7h5" stroke="#888" fill="#eee" /></Svg> },
  { label: 'Appearance view', caret: true, h: 'h-[15px]', icon: <Svg w={12} h={12}><path d="M6 3h5.300v5.500L8.500 11.300H4.500" stroke="#888" fill="#eee" /><circle cx="4.500" cy="4.500" r="3.800" fill="#d4e2f7" stroke="#7b9bd0" /></Svg> }
]

function NavBar() {
  return (
    <div className="absolute right-0 top-[97px] flex w-[23px] flex-col items-center rounded border border-[#c4c4c4] bg-[#f7f7f7] py-[2px]">
      <button aria-label="Close navigation bar" className="mr-[3px] self-end"><Svg w={5} h={5}><circle cx="2.500" cy="2.500" r="2" stroke="#999" /></Svg></button>
      {NAV_TOOLS.map(t => (
        <div key={t.label} className="flex w-full flex-col items-center">
          <button aria-label={t.label} className={clsx('flex items-center justify-center', t.h)}>{t.icon}</button>
          {t.caret && <button aria-label={`${t.label} options`} className="flex h-[8px] items-center"><SmallCaret /></button>}
          {t.rule && <span className="mt-px h-px w-[17px] bg-[#ccc]" />}
        </div>
      ))}
      <button aria-label="Navigation bar options" className="mr-[3px] mt-[3px] self-end"><Svg w={5} h={5}><circle cx="2.500" cy="2.500" r="2" stroke="#999" /></Svg></button>
    </div>
  )
}

function Viewport() {
  return (
    <main className="relative flex-1 bg-white">
      <Gate />
      <div className="absolute right-px top-[4px] flex gap-[5px]">
        <WindowButton label="Minimize" />
        <WindowButton label="Tile" />
        <WindowButton label="Close" />
      </div>
      <ViewCube />
      <NavBar />
      <div className="font-['Noto_Sans',sans-serif] text-[44px] font-bold leading-[52px] whitespace-nowrap">
        <p className="absolute left-[17px] top-[18px] flex gap-[4px] text-[45px] text-[#3f48cc]">
          PART<span className="text-[#22b14c]">2</span>
        </p>
        <div className="absolute left-[561px] top-[8px]">
          <h2 className="text-[#ed1c24]">AUTOMATIC GATE</h2>
          <p className="text-[#22b14c]">1.Create all Parts</p>
          <p className="text-[#3f48cc]">2.Assemble</p>
          <p className="text-[#00a2e8]">3.Dynamic Simulation</p>
        </div>
      </div>
      <div className="absolute -bottom-[4px] right-[81px] z-10 flex h-[14px] w-[115px] items-center bg-[#dcebf7]/70 text-[8px] text-[#bccbd8]">
        <span className="flex h-full w-[14px] items-center justify-center bg-[#d3e5f4] text-[5px] text-[#8fb4d4]">●</span>
        <span className="ml-[7px]">Rectangular Snip</span>
      </div>
    </main>
  )
}

export default function App() {
  return (
    <div className="flex min-h-screen flex-col bg-black py-[13px] font-['DejaVu_Sans_Condensed','DejaVu_Sans',sans-serif] text-[8px] leading-[11px] text-[#333]">
      <TitleBar />
      <RibbonTabs />
      <Ribbon />
      <div className="flex flex-1">
        <Browser />
        <div className="flex flex-1 flex-col">
          <Viewport />
          <nav className="flex h-[16px] shrink-0 items-stretch bg-[#d8d8d8]">
            <button className="flex items-center gap-[2px] bg-[#e2e2e2] pl-[3px] pr-[5px] text-[#444]">
              <Svg w={11} h={11}><path d="M.7 6L5.500 1l4.800 5M2 5v5.300h2.500V7h2v3.300H9V5" fill="#eee" stroke="#444" /></Svg>
              Home
            </button>
            <button className="flex items-center gap-[4px] border-b-2 border-[#2b9fc9] bg-[#f1f1f1] px-[5px] text-[#1b7fa8]">
              GATE-FINAL ASSEMBLE.iam
              <Svg w={6} h={6}><path d="M.5.500l5 5M5.500.500l-5 5" stroke="#555" /></Svg>
            </button>
            <button aria-label="Document tabs" className="ml-auto mr-[3px] self-center"><Svg w={9} h={8}><path d="M0 .5h9M0 4h9M0 7.500h9" stroke="#333" /></Svg></button>
          </nav>
        </div>
      </div>
      <footer className="flex h-[16px] shrink-0 items-center bg-[#eee]">
        <span className="flex-1 pl-[1px]">Ready</span>
        <span className="flex h-full w-[27px] items-center justify-center border-l border-[#ddd]">422</span>
        <span className="flex h-full w-[25px] items-center border-l border-[#ddd] pl-[4px]">62</span>
      </footer>
    </div>
  )
}
